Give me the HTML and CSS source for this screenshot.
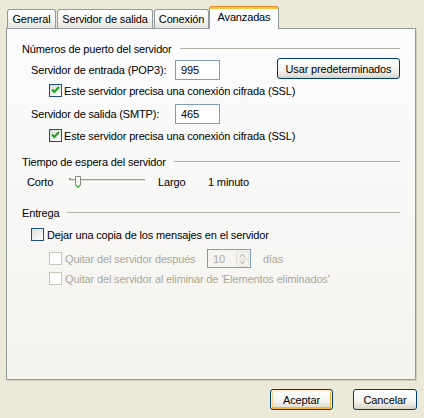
FILE: index.html
```html
<!DOCTYPE html>
<html lang="es">
<head>
<meta charset="utf-8">
<title>Avanzadas</title>
<link rel="stylesheet" href="styles.css">
</head>
<body>
<div class="dialog">
  <div class="tabs">
    <div class="tab tab-general">General</div>
    <div class="tab tab-salida">Servidor de salida</div>
    <div class="tab tab-conexion">Conexión</div>
    <div class="tab tab-selected">Avanzadas</div>
  </div>
  <div class="panel">
    <div class="section-title">Números de puerto del servidor</div>
    <div class="port-row port-first">
      <span class="port-label">Servidor de entrada (POP3):</span>
      <span class="edit">995</span>
      <button class="btn btn-defaults">Usar predeterminados</button>
    </div>
    <div class="check-row ssl-row ssl-first">
      <span class="cb"><svg width="11" height="11" viewBox="0 0 11 11"><path d="M2 4.5 L4.3 7 L9 2" fill="none" stroke="#21A121" stroke-width="2"/></svg></span>
      <span>Este servidor precisa una conexión cifrada (SSL)</span>
    </div>
    <div class="port-row port-second">
      <span class="port-label">Servidor de salida (SMTP):</span>
      <span class="edit">465</span>
    </div>
    <div class="check-row ssl-row ssl-second">
      <span class="cb"><svg width="11" height="11" viewBox="0 0 11 11"><path d="M2 4.5 L4.3 7 L9 2" fill="none" stroke="#21A121" stroke-width="2"/></svg></span>
      <span>Este servidor precisa una conexión cifrada (SSL)</span>
    </div>

    <div class="section-title section-timeout">Tiempo de espera del servidor</div>
    <div class="slider-row">
      <span>Corto</span>
      <span class="slider">
        <svg width="80" height="14" viewBox="0 0 80 14">
          <rect x="2" y="3" width="2" height="3" fill="#9D9C99"/>
          <rect x="2" y="4" width="76" height="1" fill="#9D9C99"/>
          <rect x="2" y="5" width="76" height="1" fill="#DCDBD3"/>
          <rect x="2" y="6" width="76" height="1" fill="#FFFFFF"/>
          <path d="M8.5 1.5 H13.5 V10 L11 12.5 L8.5 10 Z" fill="#F6F6F2" stroke="#8D8D86"/>
          <path d="M9 10.3 L11 12.2 L13 10.3" fill="none" stroke="#3DB63D" stroke-width="1.2"/>
        </svg>
      </span>
      <span>Largo</span>
      <span>1 minuto</span>
    </div>

    <div class="section-title section-delivery">Entrega</div>
    <div class="check-row keep-row">
      <span class="cb"></span>
      <span>Dejar una copia de los mensajes en el servidor</span>
    </div>
    <div class="check-row disabled after-row">
      <span class="cb"></span>
      <span class="after-label">Quitar del servidor después</span>
      <span class="spin">
        <span class="spin-value">10</span>
        <span class="spin-buttons">
          <svg width="13" height="16" viewBox="0 0 13 16">
            <rect x="0.5" y="0.5" width="12" height="15" rx="2" fill="#F3F2EC" stroke="#E3E1D6"/>
            <line x1="1" y1="8" x2="12" y2="8" stroke="#E3E1D6"/>
            <path d="M4 6 L6.5 3.5 L9 6" fill="none" stroke="#C9C7BA" stroke-width="1.3"/>
            <path d="M4 10 L6.5 12.5 L9 10" fill="none" stroke="#C9C7BA" stroke-width="1.3"/>
          </svg>
        </span>
      </span>
      <span class="days">días</span>
    </div>
    <div class="check-row disabled delete-row">
      <span class="cb"></span>
      <span>Quitar del servidor al eliminar de 'Elementos eliminados'</span>
    </div>
  </div>
  <div class="actions">
    <button class="btn btn-default btn-ok">Aceptar</button>
    <button class="btn btn-cancel">Cancelar</button>
  </div>
</div>
</body>
</html>
```

FILE: styles.css
```css
* { box-sizing: border-box; }

body {
  margin: 0;
  width: 424px;
  height: 418px;
  overflow: hidden;
  background: #ECE9D8;
  font-family: "Liberation Sans", Arial, sans-serif;
  font-size: 11px;
  letter-spacing: -0.15px;
  color: #000;
}

.dialog { padding-top: 6px; }

.tabs {
  display: flex;
  align-items: flex-end;
  height: 22px;
  padding-left: 7px;
}

.tab {
  height: 19px;
  margin-right: 1px;
  border: 1px solid #919B9C;
  border-bottom: none;
  border-radius: 3px 3px 0 0;
  background: linear-gradient(#FFFFFF, #F6F6F3 55%, #E6E5DE);
  display: flex;
  align-items: center;
  justify-content: center;
  padding-bottom: 1px;
}

.tab-general { width: 49px; }
.tab-salida { width: 96px; }
.tab-conexion { width: 55px; margin-right: 0; }

.tab-selected {
  width: 70px;
  height: 23px;
  margin-bottom: -1px;
  position: relative;
  z-index: 1;
  border-top-color: #E68B2C;
  background: linear-gradient(#FFC73C 0, #FFC73C 2px, #FCFCFE 2px, #FCFCFE);
  padding-bottom: 3px;
}

.panel {
  width: 410px;
  height: 352px;
  margin-left: 6px;
  border: 1px solid #919B9C;
  background: linear-gradient(#FCFCFE, #F4F3EE);
  box-shadow: 1px 1px 0 #D0CEBF;
  padding: 13px 15px 0 15px;
}

.section-title {
  display: flex;
  align-items: center;
  height: 13px;
  gap: 8px;
}

.section-title::after {
  content: "";
  flex: 1;
  height: 1px;
  background: #B3B1A3;
}

.section-timeout { margin-top: 13px; }
.section-delivery { margin-top: 17px; }

.port-row {
  display: flex;
  align-items: flex-start;
  height: 22px;
  padding-left: 9px;
}

.port-first { margin-top: 3px; }
.port-second { margin-top: 5px; }

.port-label {
  width: 144px;
  height: 20px;
  margin-top: 2px;
  display: flex;
  align-items: center;
}

.edit {
  width: 45px;
  height: 20px;
  margin-top: 2px;
  border: 1px solid #7F9DB9;
  background: #FFFFFF;
  padding-left: 5px;
  display: flex;
  align-items: center;
}

.btn {
  font: inherit;
  letter-spacing: inherit;
  color: #000;
  height: 21px;
  padding: 0;
  border: 1px solid #003C74;
  border-radius: 3px;
  background: linear-gradient(#FFFFFF, #F4F3EE 60%, #E3DFD4 88%, #D6D0C5);
}

.btn-defaults {
  width: 123px;
  margin-left: auto;
}

.check-row {
  display: flex;
  align-items: center;
  height: 13px;
  gap: 2px;
}

.cb {
  width: 13px;
  height: 13px;
  flex: none;
  border: 1px solid #1C5180;
  background: linear-gradient(135deg, #DCDCD7, #FFFFFF);
  display: flex;
  align-items: center;
  justify-content: center;
}

.ssl-row { margin-left: 27px; }
.ssl-first { margin-top: 4px; }
.ssl-second { margin-top: 5px; }

.slider-row {
  display: grid;
  grid-template-columns: 40px 91px 50px auto;
  align-items: center;
  height: 14px;
  margin-top: 7px;
  padding-left: 5px;
}

.slider { display: flex; align-items: center; }

.keep-row {
  margin-top: 9px;
  margin-left: 9px;
  gap: 3px;
}

.disabled { color: #ACA899; }
.disabled .cb {
  border-color: #CAC8BB;
  background: #FFFFFF;
}

.after-row {
  height: 19px;
  margin-top: 8px;
  margin-left: 27px;
  gap: 3px;
}

.after-label { width: 139px; }

.spin {
  width: 44px;
  height: 19px;
  border: 1px solid #7F9DB9;
  background: #F6F5F0;
  display: flex;
  align-items: center;
  justify-content: space-between;
  padding: 0 1px 0 5px;
}

.spin-buttons { display: flex; }

.days { margin-left: 9px; }

.delete-row {
  margin-top: 4px;
  margin-left: 27px;
  gap: 3px;
}

.actions {
  display: flex;
  justify-content: flex-end;
  gap: 20px;
  margin-top: 9px;
  padding-right: 7px;
}

.btn-ok { width: 63px; }
.btn-cancel { width: 64px; }

.btn-default {
  box-shadow: inset 0 1px 0 1px #FFF0CF, inset 0 -1px 0 1px #F8B330, inset 1px 0 0 1px #FBD287, inset -1px 0 0 1px #F8B330;
}
```
